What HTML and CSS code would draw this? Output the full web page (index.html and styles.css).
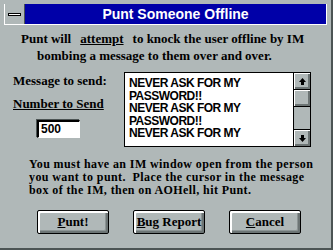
FILE: index.html
```html
<!DOCTYPE html>
<html lang="en">
<head>
    <meta charset="UTF-8">
    <title>Punt Someone Offline</title>
    <link rel="stylesheet" href="styles.css">
</head>
<body>

<div class="window">
    <div class="titlebar">
        <div class="sysmenu"><span class="sysbar"></span></div>
        <div class="caption">Punt Someone Offline</div>
    </div>

    <div class="intro">
        <div class="intro-line first">
            <span>Punt will</span>
            <span class="u">attempt</span>
            <span>to knock the user offline by IM</span>
        </div>
        <div class="intro-line second">bombing a message to them over and over.</div>
    </div>

    <div class="middle">
        <div class="left-col">
            <div class="label">Message to send:</div>
            <div class="label u number-label">Number to Send</div>
            <div class="numbox">500</div>
        </div>
        <div class="listbox">
            <div class="list-text">
                NEVER ASK FOR MY<br>
                PASSWORD!!<br>
                NEVER ASK FOR MY<br>
                PASSWORD!!<br>
                NEVER ASK FOR MY
            </div>
            <div class="scrollbar">
                <div class="sb-btn sb-up">
                    <svg width="9" height="9" viewBox="0 0 9 9"><path d="M4.5 1 L8 5 L6 5 L6 8 L3 8 L3 5 L1 5 Z" fill="#000"/></svg>
                </div>
                <div class="sb-thumb"></div>
                <div class="sb-track"></div>
                <div class="sb-btn sb-down">
                    <svg width="9" height="9" viewBox="0 0 9 9"><path d="M4.5 8 L8 4 L6 4 L6 1 L3 1 L3 4 L1 4 Z" fill="#000"/></svg>
                </div>
            </div>
        </div>
    </div>

    <div class="note">
        <div>You must have an IM window open from the person</div>
        <div>you want to punt.&nbsp; Place the cursor in the message</div>
        <div>box of the IM, then on AOHell, hit Punt.</div>
    </div>

    <div class="buttons">
        <button><span class="u">P</span>unt!</button>
        <button><span class="u">B</span>ug Report</button>
        <button><span class="u">C</span>ancel</button>
    </div>
</div>

</body>
</html>
```

FILE: styles.css
```css
/* Win 3.1 style dialog */
body {
    margin: 0;
    background-color: #b0b8b8;
    font-family: "Liberation Serif", "Times New Roman", serif;
    font-weight: bold;
    font-size: 13px;
    color: #000;
}
.window {
    width: 333px;
    height: 250px;
    box-sizing: border-box;
    border-right: 2px solid #4c5454;
    border-bottom: 2px solid #4c5454;
    overflow: hidden;
}
.titlebar {
    display: flex;
    margin: 4px 4px 0 4px;
    height: 20px;
    border-left: 1px solid #fff;
    border-right: 1px solid #fff;
    border-bottom: 1px solid #fff;
}
.sysmenu {
    width: 19px;
    border-right: 1px solid #4c5454;
    display: flex;
    align-items: center;
    justify-content: center;
}
.sysbar {
    width: 11px;
    height: 1px;
    background-color: #fff;
    border: 1px solid #000;
}
.caption {
    flex: 1;
    background-color: #0000a8;
    color: #fff;
    font-family: "Liberation Sans", Arial, sans-serif;
    font-size: 14px;
    line-height: 20px;
    text-align: center;
}
.u {
    text-decoration: underline;
}
.intro {
    padding-top: 5px;
    line-height: 17px;
}
.intro-line.first {
    display: flex;
    gap: 9px;
    padding-left: 21px;
}
.intro-line.second {
    padding-left: 37px;
}
.middle {
    display: flex;
    margin-top: 8px;
}
.left-col {
    width: 111px;
    padding-left: 13px;
    line-height: 17px;
}
.number-label {
    margin-top: 6px;
}
.numbox {
    width: 38px;
    height: 15px;
    margin: 8px 0 0 24px;
    background-color: #fff;
    border-top: 2px solid #000;
    border-left: 2px solid #000;
    border-right: 1px solid #fff;
    border-bottom: 1px solid #fff;
    box-shadow: -1px -1px 0 #4c5454;
    font-family: "Liberation Sans", Arial, sans-serif;
    font-size: 12px;
    line-height: 15px;
    padding-left: 2px;
}
.listbox {
    display: flex;
    width: 187px;
    height: 75px;
    box-sizing: border-box;
    border: 1px solid #000;
    background-color: #fff;
}
.list-text {
    flex: 1;
    padding: 4px 0 0 4px;
    font-family: "Liberation Sans", Arial, sans-serif;
    font-size: 12px;
    letter-spacing: -0.5px;
    line-height: 12.5px;
    overflow: hidden;
}
.scrollbar {
    width: 16px;
    border-left: 1px solid #000;
    display: flex;
    flex-direction: column;
    background-color: #b0b8b8;
}
.sb-btn, .sb-thumb {
    height: 16px;
    background-color: #b0b8b8;
    box-shadow: inset 1px 1px 0 #fff, inset -1px -1px 0 #6c7474, inset -2px -2px 0 #6c7474;
    display: flex;
    align-items: center;
    justify-content: center;
}
.sb-up, .sb-thumb {
    border-bottom: 1px solid #000;
}
.sb-down {
    border-top: 1px solid #000;
}
.sb-track {
    flex: 1;
}
.note {
    margin: 11px 0 0 29px;
    font-size: 12px;
    letter-spacing: 0.4px;
    line-height: 13px;
}
.buttons {
    display: flex;
    gap: 24px;
    padding-left: 37px;
    margin-top: 13px;
}
button {
    width: 72px;
    height: 24px;
    padding: 0;
    font-family: "Liberation Serif", "Times New Roman", serif;
    font-weight: bold;
    font-size: 13px;
    color: #000;
    background-color: #b0b8b8;
    border: 1px solid #000;
    border-radius: 2px;
    box-shadow: inset 2px 2px 0 #fff, inset -2px -2px 0 #6c7474, inset -3px -3px 0 #8c9494;
}
```
